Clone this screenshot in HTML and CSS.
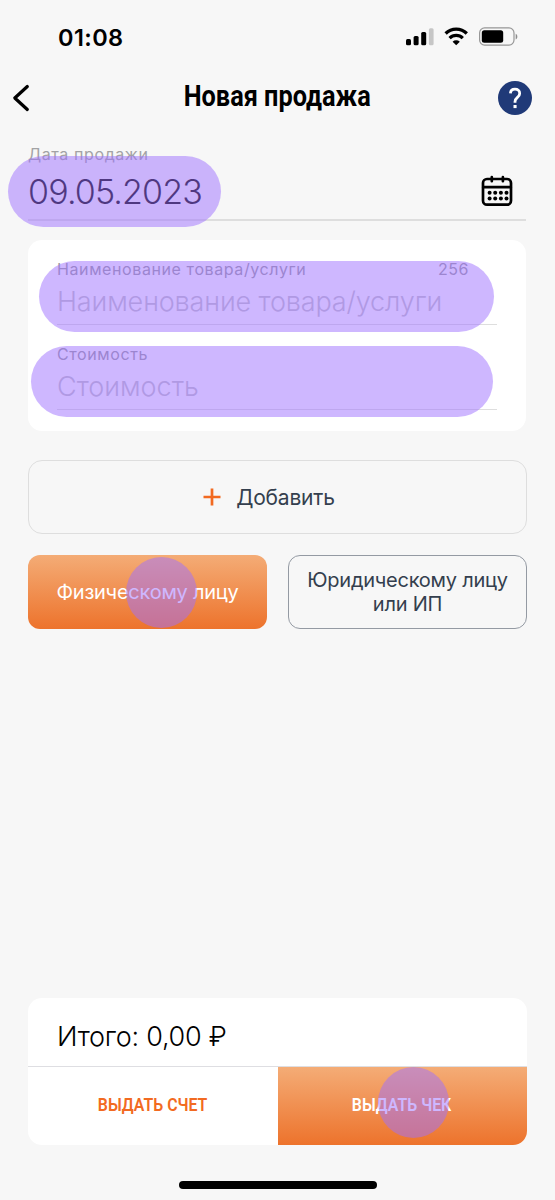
FILE: index.html
```html
<!DOCTYPE html>
<html lang="ru">
<head>
<meta charset="utf-8">
<title>Новая продажа</title>
<link rel="stylesheet" href="styles.css">
</head>
<body>
<div class="screen">
  <div class="status">
    <span class="time">01:08</span>
    <svg class="status-icons" width="112" height="20" viewBox="0 0 112 20">
      <rect x="0" y="12" width="5" height="6.3" rx="1.5"/>
      <rect x="7.6" y="9" width="5" height="9.3" rx="1.5"/>
      <rect x="15.2" y="5" width="5" height="13.3" rx="1.5"/>
      <rect x="22.9" y="1.2" width="4.7" height="17.1" rx="1.5" fill="#c6c6c6"/>
      <path d="M39.6 6.500a15.2 15.2 0 0 1 21.2 0" fill="none" stroke="#000" stroke-width="3.3"/>
      <path d="M43.6 11.1a9.4 9.4 0 0 1 13.2 0" fill="none" stroke="#000" stroke-width="3.2"/>
      <path d="M46.6 14.7a5.1 5.1 0 0 1 7.2 0L50.2 18.300z"/>
      <rect x="73.6" y="0.9" width="34.4" height="17.2" rx="5" fill="none" stroke="#979797" stroke-width="1.2"/>
      <rect x="75.8" y="3.2" width="21.4" height="12.6" rx="2.500"/>
      <path d="M109.7 6.700c2.200 1 2.200 4.800 0 5.800z" fill="#8d8d8d"/>
    </svg>
  </div>

  <div class="header">
    <svg class="back" width="20" height="30" viewBox="0 0 20 30"><path d="M16.300 3.500 3.800 15l12.500 11.500" fill="none" stroke="#000" stroke-width="3.200" stroke-linecap="round" stroke-linejoin="round"/></svg>
    <h1 class="title"><span class="squeeze title-text">Новая продажа</span></h1>
    <svg class="help" width="34" height="34" viewBox="0 0 34 34"><path d="M12.400 12.300c.2-2.600 2-4.100 4.600-4.100 2.700 0 4.700 1.600 4.700 4.200 0 2-1 3.100-2.500 4.300-1.500 1.200-2.200 2.100-2.200 4.100v1" fill="none" stroke="#fff" stroke-width="2.800"/><rect x="15.500" y="24" width="3.100" height="3.100" fill="#fff"/></svg>
  </div>

  <div class="date-field">
    <span class="label date-label">Дата продажи</span>
    <div class="date-row">
      <span class="date">09.05.2023</span>
      <svg width="32" height="32" viewBox="0 0 32 32">
        <g fill="none" stroke="#000" stroke-width="2.700" stroke-linecap="round">
          <rect x="2" y="4" width="28" height="25.700" rx="4"/>
          <path d="M2.200 12.200h27.600M10.800 2.200v4M21.900 2.200v4"/>
        </g>
        <g fill="#000">
          <circle cx="8.600" cy="17.800" r="2"/><circle cx="14.200" cy="17.800" r="2"/><circle cx="19.900" cy="17.800" r="2"/><circle cx="25.500" cy="17.800" r="2"/>
          <circle cx="8.600" cy="23.400" r="2"/><circle cx="14.200" cy="23.400" r="2"/><circle cx="19.900" cy="23.400" r="2"/><circle cx="25.500" cy="23.400" r="2"/>
        </g>
      </svg>
    </div>
    <i class="mark mark-date"></i>
  </div>

  <div class="card">
    <div class="field">
      <div class="label-row"><span class="label name-label">Наименование товара/услуги</span><span class="label count">256</span></div>
      <div class="placeholder name-value">Наименование товара/услуги</div>
      <i class="mark mark-name"></i>
    </div>
    <div class="field">
      <div class="label-row"><span class="label cost-label">Стоимость</span></div>
      <div class="placeholder cost-value">Стоимость</div>
      <i class="mark mark-cost"></i>
    </div>
  </div>

  <div class="add">
    <svg width="18" height="18" viewBox="0 0 18 18"><path d="M9 .5v17M.5 9h17" stroke="#f26a21" stroke-width="2.700"/></svg>
    <span class="add-text">Добавить</span>
  </div>

  <div class="choices">
    <div class="choice selected"><span class="person">Физическому лицу</span><i class="mark mark-person"></i></div>
    <div class="choice outlined"><span>Юридическому лицу<br>или ИП</span></div>
  </div>

  <div class="summary">
    <div class="total"><span class="total-text">Итого: 0,00 ₽</span></div>
    <div class="actions">
      <div class="action"><span class="squeeze action-text">ВЫДАТЬ СЧЕТ</span></div>
      <div class="action primary"><span class="squeeze action-text">ВЫДАТЬ ЧЕК</span><i class="mark mark-check"></i></div>
    </div>
  </div>
  <div class="home"></div>
</div>
</body>
</html>
```
FILE: styles.css
```css
* { box-sizing: border-box; }
body { margin: 0; background: #f7f7f7; font-family: Inter, "Liberation Sans", sans-serif; color: #000; }
.screen { width: 555px; height: 1200px; display: flex; flex-direction: column; overflow: hidden; }
.status { height: 74px; padding: 0 37px 0 58px; display: flex; align-items: center; justify-content: space-between; flex: none; }
.time { font-size: 23.500px; font-weight: 600; letter-spacing: .4px; }
.status-icons { display: block; }
.header { height: 48px; padding: 0 23px 0 11px; display: grid; grid-template-columns: 34px 1fr 34px; align-items: center; flex: none; }
.title { margin: 0 0 4px; display: flex; justify-content: center; padding-left: 12px; }
.squeeze { display: inline-block; font-family: Roboto, sans-serif; white-space: nowrap; }
.title-text { font-size: 29px; font-weight: 700; line-height: 44px; transform: scaleX(.872); }
.help { display: block; border-radius: 50%; background: #203a78; }
.date-field { position: relative; height: 99px; margin: 0 29px 0 28px; padding-top: 22px; border-bottom: 2px solid #dedede; flex: none; }
.label { font-size: 16px; line-height: 20px; color: #9a9a9e; letter-spacing: .6px; white-space: nowrap; }
.date-label { display: block; color: #a3a3a5; }
.count { letter-spacing: .5px; }
.date-row { display: flex; justify-content: space-between; align-items: center; height: 54px; padding-right: 13px; }
.date { font-size: 34px; font-weight: 300; color: #000; letter-spacing: -.85px; }
.mark { position: absolute; background: rgba(157, 111, 255, .5); border-radius: 36px; }
.mark-date { left: -20px; top: 34px; width: 213px; height: 71px; }
.card { height: 191px; margin: 19px 29px 0 28px; padding: 19px 29px 0; background: #fff; border-radius: 14px; flex: none; }
.field { position: relative; height: 66px; margin-bottom: 19px; border-bottom: 1.500px solid #dedede; }
.label-row { display: flex; justify-content: space-between; padding-right: 28px; }
.placeholder { font-size: 27px; font-weight: 300; line-height: 34px; margin-top: 6px; color: #c3c3c7; white-space: nowrap; letter-spacing: -.14px; }
.cost-value { letter-spacing: 0; }
.mark-name { left: -18px; top: 2px; width: 455px; height: 71px; }
.mark-cost { left: -26px; top: 2px; width: 462px; height: 71px; }
.add { height: 74px; margin: 29px 28px 0; border: 1.500px solid #dedede; border-radius: 14px; display: flex; align-items: center; justify-content: center; gap: 15px; color: #343f4e; font-size: 21px; letter-spacing: -.2px; flex: none; padding-right: 17px; }
.choices { display: grid; grid-template-columns: 1fr 1fr; gap: 21px; height: 74px; margin: 21px 28px 0; flex: none; font-size: 20px; line-height: 24px; letter-spacing: -.24px; text-align: center; }
.choice { position: relative; border-radius: 12px; display: flex; align-items: center; justify-content: center; }
.selected, .primary { background: linear-gradient(#f4ac76, #ed732c); color: #fff; }
.outlined { border: 1.500px solid #949aa3; color: #343f4e; }
.mark-person { left: 98px; top: 2px; width: 71px; height: 71px; }
.summary { height: 147px; margin: 369px 28px 0; background: #fff; border-radius: 14px; overflow: hidden; flex: none; }
.total { height: 69px; padding: 9px 0 0 29px; display: flex; align-items: center; border-bottom: 1.500px solid #dedee2; font-size: 27px; font-weight: 300; letter-spacing: -.25px; }
.actions { display: grid; grid-template-columns: 1fr 1fr; height: 78px; }
.action { position: relative; display: flex; align-items: center; justify-content: center; color: #f26a21; padding-bottom: 3px; }
.action.primary { color: #fff; padding-right: 2px; }
.action-text { font-size: 19px; font-weight: 600; transform: scaleX(.835); }
.mark-check { left: 100px; top: 0; width: 71px; height: 71px; }
.home { width: 198px; height: 8px; border-radius: 4px; background: #000; margin: 36px 0 0 179px; flex: none; }
```
